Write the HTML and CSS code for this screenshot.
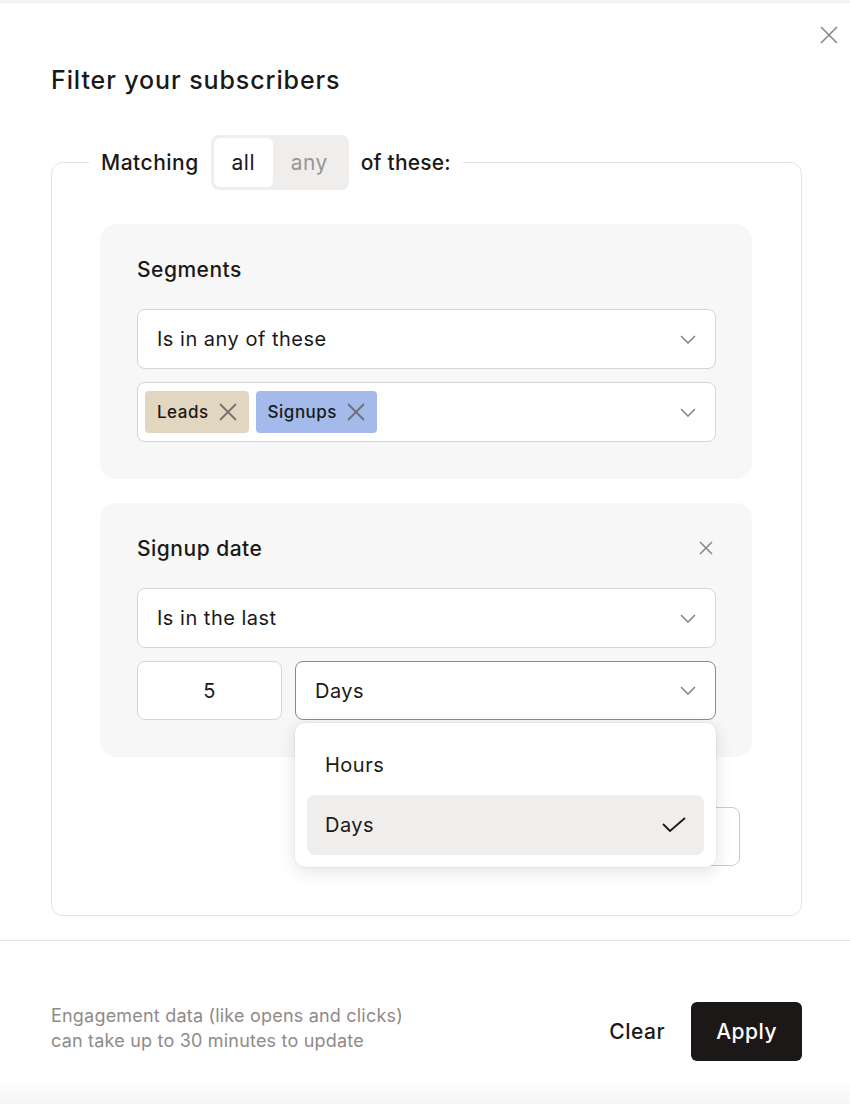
FILE: index.html
```html
<!DOCTYPE html>
<html lang="en">
<head>
	<meta charset="UTF-8">
	<meta name="viewport" content="width=device-width, initial-scale=1.0">
	<title>Filter your subscribers</title>
	<link rel="stylesheet" href="styles.css">
</head>
<body>
	<div class="modal">
		<button type="button" class="modal-close" aria-label="Close">
			<svg width="18" height="18" viewBox="0 0 18 18"><path d="M1 1 L17 17 M17 1 L1 17" stroke="#8a8585" stroke-width="1.6" fill="none"/></svg>
		</button>

		<div class="modal-body">
			<h2 class="modal-title">Filter your subscribers</h2>

			<fieldset class="match-box">
				<legend class="match-legend">
					<span>Matching</span>
					<span class="toggle">
						<span class="toggle-opt active">all</span>
						<span class="toggle-opt">any</span>
					</span>
					<span>of these:</span>
				</legend>

				<div class="filter-card">
					<div class="card-head">
						<h3>Segments</h3>
					</div>
					<div class="select">
						<span>Is in any of these</span>
						<svg class="chev" width="16" height="9" viewBox="0 0 16 9"><path d="M1 1 L8 8 L15 1" stroke="#8a8585" stroke-width="1.6" fill="none"/></svg>
					</div>
					<div class="select tags-select">
						<div class="tags">
							<span class="tag tag-leads">Leads
								<svg width="18" height="18" viewBox="0 0 18 18"><path d="M1 1 L17 17 M17 1 L1 17" stroke="#77716b" stroke-width="1.8" fill="none"/></svg>
							</span>
							<span class="tag tag-signups">Signups
								<svg width="18" height="18" viewBox="0 0 18 18"><path d="M1 1 L17 17 M17 1 L1 17" stroke="#6b6f78" stroke-width="1.8" fill="none"/></svg>
							</span>
						</div>
						<svg class="chev" width="16" height="9" viewBox="0 0 16 9"><path d="M1 1 L8 8 L15 1" stroke="#8a8585" stroke-width="1.6" fill="none"/></svg>
					</div>
				</div>

				<div class="filter-card">
					<div class="card-head">
						<h3>Signup date</h3>
						<svg width="14" height="14" viewBox="0 0 14 14"><path d="M1 1 L13 13 M13 1 L1 13" stroke="#8a8585" stroke-width="1.5" fill="none"/></svg>
					</div>
					<div class="select">
						<span>Is in the last</span>
						<svg class="chev" width="16" height="9" viewBox="0 0 16 9"><path d="M1 1 L8 8 L15 1" stroke="#8a8585" stroke-width="1.6" fill="none"/></svg>
					</div>
					<div class="range-row">
						<div class="num-input">5</div>
						<div class="unit-wrap">
							<div class="select focused">
								<span>Days</span>
								<svg class="chev" width="16" height="9" viewBox="0 0 16 9"><path d="M1 1 L8 8 L15 1" stroke="#8a8585" stroke-width="1.6" fill="none"/></svg>
							</div>
							<ul class="dropdown">
								<li>Hours</li>
								<li class="selected">Days
									<svg width="24" height="16" viewBox="0 0 24 16"><path d="M1 7 L8 14 L23 1" stroke="#1b1918" stroke-width="1.8" fill="none"/></svg>
								</li>
							</ul>
						</div>
					</div>
				</div>

				<div class="add-row">
					<button type="button" class="add-btn">+ Add filter</button>
				</div>
			</fieldset>
		</div>

		<div class="modal-footer">
			<p class="note">Engagement data (like opens and clicks)<br>can take up to 30 minutes to update</p>
			<div class="actions">
				<button type="button" class="btn-clear">Clear</button>
				<button type="button" class="btn-apply">Apply</button>
			</div>
		</div>
	</div>
</body>
</html>
```

FILE: styles.css
```css
body {
	margin: 0;
	background-color: #f3f3f3;
	font-family: Inter, 'Noto Sans', sans-serif;
	letter-spacing: 0.5px;
	color: #1b1918;
}

.modal {
	position: relative;
	margin-top: 3px;
	height: 1101px;
	background: linear-gradient(#ffffff 1074px, #f6f6f6);
}

.modal-close {
	position: absolute;
	top: 23px;
	right: 12px;
	background: none;
	border: none;
	padding: 0;
	cursor: pointer;
}

.modal-body {
	padding: 59px 48px 24px 51px;
}

.modal-title {
	margin: 0 0 37px;
	font-size: 25px;
	line-height: 36px;
	font-weight: 500;
	letter-spacing: 0.9px;
}

.match-box {
	margin: 0;
	border: 1px solid #e4e2e1;
	border-radius: 12px;
	padding: 34px 49px 49px 48px;
}

.match-legend {
	display: flex;
	align-items: center;
	gap: 12px;
	margin-left: -11px;
	padding: 0 12px;
	font-size: 21px;
	font-weight: 500;
}

.match-legend > span:last-child {
	letter-spacing: 0.2px;
}

.toggle {
	display: flex;
	background-color: #efeeec;
	border-radius: 8px;
	padding: 3px;
}

.toggle-opt {
	display: flex;
	align-items: center;
	justify-content: center;
	height: 49px;
	width: 73px;
	color: #9a9592;
	font-weight: 400;
	border-radius: 6px;
}

.toggle-opt.active {
	width: 59px;
	background-color: #ffffff;
	color: #1b1918;
}

.filter-card {
	background-color: #f7f7f7;
	border-radius: 16px;
	padding: 33px 36px 37px 37px;
	margin-bottom: 24px;
}

.card-head {
	display: flex;
	align-items: center;
	justify-content: space-between;
	height: 24px;
	margin-bottom: 28px;
	padding-right: 3px;
}

.card-head h3 {
	margin: 0;
	font-size: 21px;
	font-weight: 500;
}

.select {
	display: flex;
	align-items: center;
	justify-content: space-between;
	box-sizing: border-box;
	height: 60px;
	padding: 0 19px;
	background-color: #ffffff;
	border: 1px solid #d9d5d3;
	border-radius: 8px;
	font-size: 20px;
	margin-bottom: 13px;
}

.select:last-child {
	margin-bottom: 0;
}

.tags-select {
	padding-left: 7px;
}

.tags {
	display: flex;
	gap: 7px;
}

.tag {
	display: flex;
	align-items: center;
	gap: 10px;
	height: 42px;
	padding: 0 12px;
	border-radius: 4px;
	font-size: 17px;
	font-weight: 500;
}

.tag-leads {
	background-color: #e3d6c1;
}

.tag-signups {
	background-color: #a4baea;
}

.range-row {
	display: flex;
	gap: 13px;
}

.num-input {
	display: flex;
	align-items: center;
	justify-content: center;
	box-sizing: border-box;
	width: 145px;
	height: 59px;
	background-color: #ffffff;
	border: 1px solid #d9d5d3;
	border-radius: 8px;
	font-size: 20px;
}

.unit-wrap {
	position: relative;
	flex: 1;
}

.unit-wrap .select {
	height: 59px;
	margin-bottom: 0;
}

.select.focused {
	border-color: #8e8888;
}

.dropdown {
	position: absolute;
	top: 62px;
	left: 0;
	right: 0;
	z-index: 2;
	list-style: none;
	margin: 0;
	padding: 12px;
	background-color: #ffffff;
	border-radius: 10px;
	box-shadow: 0 4px 18px rgba(0, 0, 0, 0.12), 0 0 0 1px rgba(0, 0, 0, 0.03);
}

.dropdown li {
	display: flex;
	align-items: center;
	justify-content: space-between;
	height: 60px;
	padding: 0 18px;
	font-size: 20px;
	border-radius: 8px;
}

.dropdown li.selected {
	background-color: #efeeec;
}

.add-row {
	display: flex;
	justify-content: flex-end;
	padding-top: 26px;
	padding-right: 12px;
}

.add-btn {
	height: 59px;
	width: 190px;
	background-color: #ffffff;
	border: 1px solid #cfcaca;
	border-radius: 8px;
	font-family: inherit;
	font-size: 18px;
	color: #1b1918;
}

.modal-footer {
	display: flex;
	align-items: center;
	justify-content: space-between;
	border-top: 1px solid #e8e6e5;
	padding: 61px 48px 0 51px;
}

.note {
	margin: 0 0 8px;
	font-size: 18px;
	line-height: 25px;
	letter-spacing: 0.2px;
	color: #8f8a87;
}

.actions {
	display: flex;
	align-items: center;
	gap: 14px;
}

.btn-clear {
	background: none;
	border: none;
	padding: 0 12px;
	font-family: inherit;
	font-size: 21px;
	font-weight: 500;
	letter-spacing: 0.5px;
	color: #1b1918;
}

.btn-apply {
	height: 59px;
	padding: 0 25px;
	background-color: #1c1817;
	border: none;
	border-radius: 6px;
	font-family: inherit;
	font-size: 21px;
	font-weight: 500;
	letter-spacing: 0.5px;
	color: #ffffff;
}
```
